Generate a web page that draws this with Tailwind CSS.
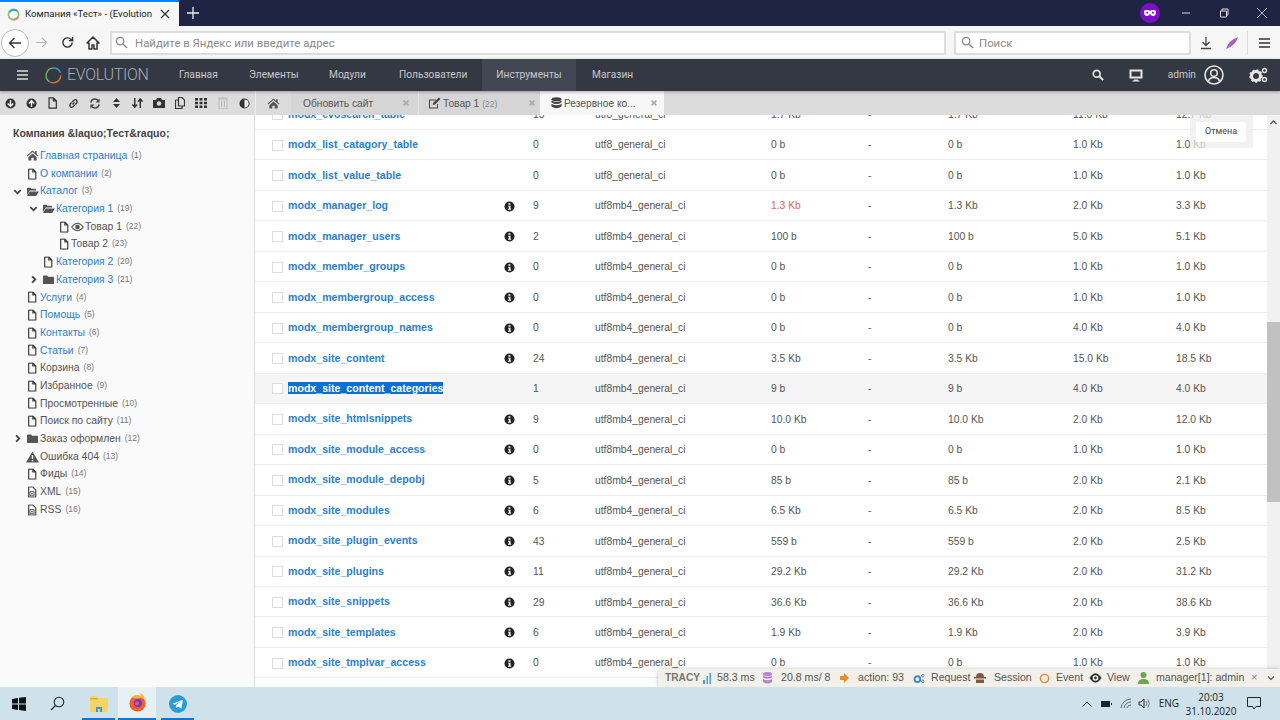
<!DOCTYPE html>
<html lang="ru">
<head>
<meta charset="utf-8">
<title>Evolution</title>
<script src="https://cdn.jsdelivr.net/npm/@tailwindcss/browser@4"></script>
</head>
<body class="w-[1280px] h-[720px] overflow-hidden bg-white font-['Liberation_Sans',sans-serif] relative">
<svg class="hidden"><defs>
<symbol id="f" viewBox="0 0 12 14"><path d="M2 1h5l3.500 3.500V13H2z M7 1v3.500h3.500" fill="none" stroke="#444" stroke-width="1.500" stroke-linejoin="round"/></symbol>
<symbol id="fo" viewBox="0 0 14 12"><path d="M1 3q0-1 1-1h3l1 1h4q1 0 1 1v1H4L1 10zM4 6h10l-3 5H1z" fill="#555"/></symbol>
<symbol id="fc" viewBox="0 0 14 12"><path d="M1 2.500q0-1 1-1h3.500l1 1.500H12q1 0 1 1v6q0 1-1 1H2q-1 0-1-1z" fill="#555"/></symbol>
<symbol id="cd" viewBox="0 0 10 10"><path d="M1.500 3.500L5 7l3.500-3.500" fill="none" stroke="#444" stroke-width="2"/></symbol>
<symbol id="cr" viewBox="0 0 10 10"><path d="M3.500 1.500L7 5l-3.500 3.500" fill="none" stroke="#444" stroke-width="2"/></symbol>
<symbol id="x" viewBox="0 0 10 10"><path d="M2 2l6 6M8 2l-6 6" stroke="#aaa" stroke-width="2"/></symbol>
<symbol id="i" viewBox="0 0 12 12"><circle cx="6" cy="6" r="5.500" fill="#222"/><path d="M4.800 2.400h2.200v1.800H4.800zM4.600 5.100h2.500v3.300h.7v1.100H4.400V8.400h.8V6.200h-.6z" fill="#fff"/></symbol>
<symbol id="h" viewBox="0 0 14 12"><path d="M7 .5L.5 6.300l.8.9L7 2.200l5.700 5 .8-.9-2-1.800V1.200h-1.600v1.800zM2.500 7.800V11.500h3.200V8.500h2.600v3h3.200V7.800L7 3.900z" fill="#555"/></symbol>
<symbol id="xml" viewBox="0 0 12 14"><path d="M2 1h5l3.500 3.500V13H2z" fill="none" stroke="#444" stroke-width="1.400"/><path d="M3.500 6.500h5v5h-5z M5 8l2 2M7 8l-2 2" fill="none" stroke="#444"/></symbol>
</defs></svg>

<div class="flex h-[26px] bg-[#1f2344]">
  <div class="w-[179px] bg-[#f7f7f7] border-t-2 border-[#0a84ff] flex items-center pl-[7px] gap-[5px] text-[9.600px] text-[#222] font-['Roboto',sans-serif] whitespace-nowrap overflow-hidden">
    <svg class="w-[13px] h-[13px] shrink-0" viewBox="0 0 14 14"><circle cx="7" cy="7" r="5.500" fill="#fff" stroke="#7cc576" stroke-width="1.800"/><path d="M3 4.500A5.500 5.500 0 0 1 11 3.200" fill="none" stroke="#3b9dd6" stroke-width="1.800"/><path d="M12 9.500a5.500 5.500 0 0 1-5 3" fill="none" stroke="#e57a5e" stroke-width="1.800"/></svg>
    <span class="w-[127px] shrink-0">Компания «Тест» - (Evolution</span>
    <svg class="w-[10px] h-[10px] ml-[3px] shrink-0" viewBox="0 0 10 10"><path d="M1 1l8 8M9 1l-8 8" stroke="#333" stroke-width="1.200"/></svg>
  </div>
  <svg class="w-[12px] h-[12px] ml-[8px] mt-[7px]" viewBox="0 0 12 12"><path d="M6 0v12M0 6h12" stroke="#eee" stroke-width="1.300"/></svg>
  <div class="ml-auto flex items-center">
    <div class="w-[20px] h-[20px] rounded-full bg-[#7b10c8] flex items-center justify-center mr-[21px]"><svg class="w-[12px] h-[6px]" viewBox="0 0 12 6"><path d="M0 1.500Q0 0 2 0h2.500L6 1l1.500-1H10q2 0 2 1.500Q12 6 9 6 7 6 6 4 5 6 3 6 0 6 0 1.500z" fill="#fff"/><circle cx="3.200" cy="2.800" r="1" fill="#7b10c8"/><circle cx="8.800" cy="2.800" r="1" fill="#7b10c8"/></svg></div>
    <svg class="w-[10px] h-[10px] mr-[28px]" viewBox="0 0 10 10"><path d="M1 5h8" stroke="#ddd"/></svg>
    <svg class="w-[10px] h-[10px] mr-[28px]" viewBox="0 0 10 10"><path d="M1.500 3h6v6h-6zM3 3V1h6v6H7.500" fill="none" stroke="#ddd"/></svg>
    <svg class="w-[10px] h-[10px] mr-[13px]" viewBox="0 0 10 10"><path d="M0 0l10 10M10 0L0 10" stroke="#ddd" stroke-width=".8"/></svg>
  </div>
</div>

<div class="h-[33px] bg-[#f6f6f6] flex items-center relative">
  <div class="w-[28px] h-[28px] ml-[1px] rounded-full border border-[#bbb] bg-white flex items-center justify-center"><svg class="w-[14px] h-[14px]" viewBox="0 0 14 14"><path d="M13 7H1.500M6.500 2L1.500 7l5 5" fill="none" stroke="#333" stroke-width="1.300"/></svg></div>
  <svg class="w-[13px] h-[13px] ml-[6px]" viewBox="0 0 14 14"><path d="M13 7H1.500M6.500 2L1.500 7l5 5" fill="none" stroke="#b5b5b5" stroke-width="1.200" transform="rotate(180 7 7)"/></svg>
  <svg class="w-[13px] h-[13px] ml-[13px]" viewBox="0 0 14 14"><path d="M12 7a5 5 0 1 1-1.500-3.600L12.500 5V1M12.500 5H8.500" fill="none" stroke="#333" stroke-width="1.500"/></svg>
  <svg class="w-[14px] h-[14px] ml-[12px]" viewBox="0 0 14 14"><path d="M7 1L1 7h2v6h3V9h2v4h3V7h2z" fill="none" stroke="#333" stroke-width="1.500" stroke-linejoin="round"/></svg>
  <div class="w-[836px] h-[24px] ml-[10px] bg-white border-2 border-[#ddd] rounded-[2px] flex items-center pl-[3px] gap-[7px] font-['Roboto',sans-serif] text-[11.400px] text-[#8a8a8a]">
    <svg class="w-[13px] h-[13px]" viewBox="0 0 14 14"><circle cx="5.500" cy="5.500" r="4" fill="none" stroke="#888" stroke-width="1.300"/><path d="M8.500 8.500L13 13" stroke="#888" stroke-width="1.500"/></svg>
    <span class="pt-[2px]">Найдите в Яндекс или введите адрес</span>
  </div>
  <div class="w-[237px] h-[24px] ml-[8px] bg-white border-2 border-[#ddd] rounded-[2px] flex items-center pl-[5px] gap-[5px] font-['Roboto',sans-serif] text-[11.400px] text-[#8a8a8a]">
    <svg class="w-[13px] h-[13px]" viewBox="0 0 14 14"><circle cx="5.500" cy="5.500" r="4" fill="none" stroke="#888" stroke-width="1.300"/><path d="M8.500 8.500L13 13" stroke="#888" stroke-width="1.500"/></svg>
    <span class="pt-[2px]">Поиск</span>
  </div>
  <svg class="w-[12px] h-[14px] ml-[9px]" viewBox="0 0 12 14"><path d="M6 1v8M2.500 6L6 9.500 9.500 6M1 12.500h10" fill="none" stroke="#444" stroke-width="1.300"/></svg>
  <svg class="w-[14px] h-[14px] ml-[13px]" viewBox="0 0 14 14"><path d="M1 13Q4 4 13 1 11 9 1 13z" fill="#a35fc9"/></svg>
  <div class="w-px h-[24px] bg-[#ddd] ml-[8px]"></div>
  <svg class="w-[11px] h-[10px] ml-[11px]" viewBox="0 0 11 10"><path d="M0 1h11M0 5h11M0 9h11" stroke="#333" stroke-width="1.300"/></svg>
</div>

<div class="h-[32px] bg-[#343843] flex items-center text-[#c7c9cd] text-[10.200px] font-['Roboto',sans-serif] shadow-[0_1px_3px_rgba(0,0,0,.3)] relative z-10">
  <svg class="w-[11px] h-[10px] ml-[17px]" viewBox="0 0 11 10"><path d="M0 1h11M0 5h11M0 9h11" stroke="#ddd" stroke-width="1.600"/></svg>
  <svg class="w-[17px] h-[17px] ml-[17px]" viewBox="0 0 16 16"><path d="M8 1a7 7 0 0 1 6.500 4.500" fill="none" stroke="#3a9ad9" stroke-width="1.300"/><path d="M14.800 8A7 7 0 0 1 5 14.300" fill="none" stroke="#e2743f" stroke-width="1.300"/><path d="M4.500 14A7 7 0 0 1 8 1" fill="none" stroke="#62b655" stroke-width="1.300"/></svg>
  <span class="ml-[5px] w-[112px] text-[16px] font-light tracking-[-0.3px] text-[#a9acb2]">EVOLUTION</span>
  <span class="w-[70px]">Главная</span>
  <span class="w-[80px]">Элементы</span>
  <span class="w-[70px]">Модули</span>
  <span class="w-[83px]">Пользователи</span>
  <span class="w-[94px] h-full bg-[#424753] flex items-center justify-center">Инструменты</span>
  <span class="ml-[16px]">Магазин</span>
  <div class="ml-auto flex items-center">
    <svg class="w-[12px] h-[12px]" viewBox="0 0 14 14"><circle cx="5.500" cy="5.500" r="4" fill="none" stroke="#e5e5e5" stroke-width="2"/><path d="M8.500 8.500L13 13" stroke="#e5e5e5" stroke-width="2.400"/></svg>
    <svg class="w-[14px] h-[13px] ml-[25px]" viewBox="0 0 14 13"><path d="M1.500 1.500h11v7h-11z" fill="none" stroke="#e5e5e5" stroke-width="2"/><path d="M5 10.500h4v1h1.500v1h-7v-1H5z" fill="#e5e5e5"/></svg>
    <span class="ml-[25px]">admin</span>
    <svg class="w-[20px] h-[20px] ml-[8px]" viewBox="0 0 20 20"><circle cx="10" cy="10" r="9" fill="none" stroke="#e5e5e5" stroke-width="1.600"/><circle cx="10" cy="8" r="3.300" fill="none" stroke="#e5e5e5" stroke-width="1.500"/><path d="M4.500 16q1-3.500 5.500-3.500t5.500 3.500" fill="none" stroke="#e5e5e5" stroke-width="1.500"/></svg>
    <svg class="w-[19px] h-[16px] ml-[25px] mr-[12px]" viewBox="0 0 19 16"><circle cx="7" cy="9" r="4.500" fill="none" stroke="#e5e5e5" stroke-width="3"/><circle cx="7" cy="9" r="6" fill="none" stroke="#e5e5e5" stroke-width="1.600" stroke-dasharray="2 2"/><circle cx="15.500" cy="3.500" r="2" fill="none" stroke="#e5e5e5" stroke-width="1.400"/><circle cx="15.500" cy="12.500" r="2" fill="none" stroke="#e5e5e5" stroke-width="1.400"/></svg>
  </div>
</div>

<div class="h-[24px] flex bg-[#dcdcdc] text-[10.200px] text-[#555]">
  <div class="w-[255px] flex items-center">
    <svg class="w-[11px] h-[11px] ml-[5px]" viewBox="0 0 12 12"><circle cx="6" cy="6" r="5.500" fill="#333"/><path d="M6 2.500v6M3 6l3 3 3-3" fill="none" stroke="#fff" stroke-width="1.500"/></svg>
    <svg class="w-[11px] h-[11px] ml-[10px]" viewBox="0 0 12 12"><circle cx="6" cy="6" r="5.500" fill="#333"/><path d="M6 9.500v-6M3 6l3-3 3 3" fill="none" stroke="#fff" stroke-width="1.500"/></svg>
    <svg class="w-[11px] h-[12px] ml-[10px]" viewBox="0 0 12 14"><path d="M2 1h5l3.500 3.500V13H2z M7 1v3.500h3.500" fill="none" stroke="#333" stroke-width="1.400"/></svg>
    <svg class="w-[11px] h-[11px] ml-[10px]" viewBox="0 0 12 12"><path d="M5 7l2-2M4.500 4.500L6.500 2.500q2-1.500 3 0t0 3L8 7M7.500 7.500L5.500 9.500q-2 1.500-3 0t0-3L4 5" fill="none" stroke="#333" stroke-width="1.500"/></svg>
    <svg class="w-[12px] h-[11px] ml-[10px]" viewBox="0 0 12 12"><path d="M1.500 5A4.500 4.500 0 0 1 10 3.500M10.500 7A4.500 4.500 0 0 1 2 8.500" fill="none" stroke="#444" stroke-width="1.600"/><path d="M11 .5V5H6.500zM1 11.500V7h4.500z" fill="#444"/></svg>
    <svg class="w-[7px] h-[10px] ml-[12px]" viewBox="0 0 7 10"><path d="M3.500 0L7 4H0zM3.500 10L0 6h7z" fill="#333"/></svg>
    <svg class="w-[11px] h-[11px] ml-[12px]" viewBox="0 0 12 12"><path d="M3 0v9M.5 7L3 10l2.500-3M9 11V2M6.500 4L9 1l2.500 3" fill="none" stroke="#333" stroke-width="1.600"/></svg>
    <svg class="w-[12px] h-[10px] ml-[10px]" viewBox="0 0 12 10"><path d="M0 2h3l1-2h4l1 2h3v8H0z" fill="#333"/><circle cx="6" cy="5.500" r="2.200" fill="#ddd"/></svg>
    <svg class="w-[10px] h-[12px] ml-[10px]" viewBox="0 0 10 12"><path d="M3.500 .5H7L9.500 3v6h-6zM.5 3h3v6.500h0V3zM.5 3v8.500h6.500V9" fill="none" stroke="#333" stroke-width="1.200"/></svg>
    <svg class="w-[12px] h-[10px] ml-[10px]" viewBox="0 0 12 10"><path d="M0 0h3v2.500H0zM4.500 0h3v2.500h-3zM9 0h3v2.500H9zM0 3.700h3v2.600H0zM4.500 3.700h3v2.600h-3zM9 3.700h3v2.600H9zM0 7.500h3V10H0zM4.500 7.500h3V10h-3zM9 7.500h3V10H9z" fill="#333"/></svg>
    <svg class="w-[10px] h-[12px] ml-[11px]" viewBox="0 0 10 12"><path d="M1 2h8v10H1zM0 1h10M3.500 0h3" fill="none" stroke="#bbb"/><path d="M3.500 4v6M6.500 4v6" stroke="#bbb"/></svg>
    <svg class="w-[11px] h-[11px] ml-[11px]" viewBox="0 0 12 12"><circle cx="6" cy="6" r="5.500" fill="#333"/><path d="M6 1.500a4.500 4.500 0 0 1 0 9z" fill="#eee"/></svg>
  </div>
  <div class="w-px bg-[#eee]"></div>
  <div class="w-[35px] flex items-center justify-center"><svg class="w-[13px] h-[11px]" viewBox="0 0 14 12"><use href="#h"/></svg></div>
  <div class="w-[127px] flex items-center pl-[12px] bg-[#d6d6d6] whitespace-nowrap"><span class="pt-[2px]">Обновить сайт</span><svg class="w-[8px] h-[8px] ml-[29px]" viewBox="0 0 10 10"><use href="#x"/></svg></div>
  <div class="w-[122px] flex items-center pl-[9px] bg-[#d6d6d6] border-l border-[#e6e6e6] whitespace-nowrap"><svg class="w-[13px] h-[12px] mr-[2px]" viewBox="0 0 13 12"><path d="M1 2.500h7v1H2v7h7V7h1v4.500H1z" fill="#444"/><path d="M11 .5l1.500 1.500L7 7.500 4.800 8 5.300 5.800z" fill="#444"/></svg><span class="pt-[2px]">Товар 1</span><span class="text-[8.500px] text-[#888] ml-[3px] pt-[2px]">(22)</span><svg class="w-[8px] h-[8px] ml-[31px]" viewBox="0 0 10 10"><use href="#x"/></svg></div>
  <div class="w-[124px] flex items-center pl-[11px] bg-[#f7f7f7] whitespace-nowrap"><svg class="w-[11px] h-[12px] mr-[2px]" viewBox="0 0 11 12"><ellipse cx="5.500" cy="2.200" rx="5" ry="2" fill="#444"/><path d="M.5 3.500q5 3 10 0v2q-5 3-10 0zM.5 6.800q5 3 10 0v2.800q-5 3.500-10 0z" fill="#444"/></svg><span class="pt-[2px]">Резервное ко...</span><svg class="w-[8px] h-[8px] ml-[14px]" viewBox="0 0 10 10"><use href="#x"/></svg></div>
</div>

<div class="h-[572px] flex relative overflow-hidden">
  <aside class="w-[255px] shrink-0 border-r border-[#ddd] bg-[#fafafa]">
    <div class="h-[40px] pl-[13px] pt-[12px] text-[10.500px] font-bold text-[#444] leading-[13px]">Компания &amp;laquo;Тест&amp;raquo;</div>
    <div class="text-[10.400px] leading-[17.700px] text-[#555] mt-[-8px]">
      <div class="h-[17.700px] flex items-center pl-[26px]"><svg class="w-[13px] h-[11px] mr-px" viewBox="0 0 14 12"><use href="#h"/></svg><a class="text-[#2a7fd0]">Главная страница</a><span class="text-[8.500px] text-[#777] ml-[4px]">(1)</span></div>
      <div class="h-[17.700px] flex items-center pl-[27px]"><svg class="w-[10px] h-[12px] mr-[3px]" viewBox="0 0 12 14"><use href="#f"/></svg><a class="text-[#2a7fd0]">О компании</a><span class="text-[8.500px] text-[#777] ml-[4px]">(2)</span></div>
      <div class="h-[17.700px] flex items-center pl-[13px]"><svg class="w-[9px] h-[9px] mr-[4px]" viewBox="0 0 10 10"><use href="#cd"/></svg><svg class="w-[13px] h-[11px] mr-px" viewBox="0 0 14 12"><use href="#fo"/></svg><a class="text-[#2a7fd0]">Каталог</a><span class="text-[8.500px] text-[#777] ml-[4px]">(3)</span></div>
      <div class="h-[17.700px] flex items-center pl-[29px]"><svg class="w-[9px] h-[9px] mr-[4px]" viewBox="0 0 10 10"><use href="#cd"/></svg><svg class="w-[13px] h-[11px] mr-px" viewBox="0 0 14 12"><use href="#fo"/></svg><a class="text-[#2a7fd0]">Категория 1</a><span class="text-[8.500px] text-[#777] ml-[4px]">(19)</span></div>
      <div class="h-[17.700px] flex items-center pl-[59px]"><svg class="w-[10px] h-[12px] mr-[2px]" viewBox="0 0 12 14"><use href="#f"/></svg><svg class="w-[13px] h-[10px] mr-px" viewBox="0 0 14 10"><path d="M.7 5Q4 1 7 1t6.300 4Q10 9 7 9T.7 5z" fill="none" stroke="#555" stroke-width="1.200"/><circle cx="7" cy="5" r="2.500" fill="#555"/></svg><span>Товар 1</span><span class="text-[8.500px] text-[#777] ml-[4px]">(22)</span></div>
      <div class="h-[17.700px] flex items-center pl-[59px]"><svg class="w-[10px] h-[12px] mr-[2px]" viewBox="0 0 12 14"><use href="#f"/></svg><span>Товар 2</span><span class="text-[8.500px] text-[#777] ml-[4px]">(23)</span></div>
      <div class="h-[17.700px] flex items-center pl-[43px]"><svg class="w-[10px] h-[12px] mr-[3px]" viewBox="0 0 12 14"><use href="#f"/></svg><a class="text-[#2a7fd0]">Категория 2</a><span class="text-[8.500px] text-[#777] ml-[4px]">(20)</span></div>
      <div class="h-[17.700px] flex items-center pl-[29px]"><svg class="w-[9px] h-[9px] mr-[4px]" viewBox="0 0 10 10"><use href="#cr"/></svg><svg class="w-[13px] h-[11px] mr-px" viewBox="0 0 14 12"><use href="#fc"/></svg><a class="text-[#2a7fd0]">Категория 3</a><span class="text-[8.500px] text-[#777] ml-[4px]">(21)</span></div>
      <div class="h-[17.700px] flex items-center pl-[27px]"><svg class="w-[10px] h-[12px] mr-[3px]" viewBox="0 0 12 14"><use href="#f"/></svg><a class="text-[#2a7fd0]">Услуги</a><span class="text-[8.500px] text-[#777] ml-[4px]">(4)</span></div>
      <div class="h-[17.700px] flex items-center pl-[27px]"><svg class="w-[10px] h-[12px] mr-[3px]" viewBox="0 0 12 14"><use href="#f"/></svg><a class="text-[#2a7fd0]">Помощь</a><span class="text-[8.500px] text-[#777] ml-[4px]">(5)</span></div>
      <div class="h-[17.700px] flex items-center pl-[27px]"><svg class="w-[10px] h-[12px] mr-[3px]" viewBox="0 0 12 14"><use href="#f"/></svg><a class="text-[#2a7fd0]">Контакты</a><span class="text-[8.500px] text-[#777] ml-[4px]">(6)</span></div>
      <div class="h-[17.700px] flex items-center pl-[27px]"><svg class="w-[10px] h-[12px] mr-[3px]" viewBox="0 0 12 14"><use href="#f"/></svg><a class="text-[#2a7fd0]">Статьи</a><span class="text-[8.500px] text-[#777] ml-[4px]">(7)</span></div>
      <div class="h-[17.700px] flex items-center pl-[27px]"><svg class="w-[10px] h-[12px] mr-[3px]" viewBox="0 0 12 14"><use href="#f"/></svg><span>Корзина</span><span class="text-[8.500px] text-[#777] ml-[4px]">(8)</span></div>
      <div class="h-[17.700px] flex items-center pl-[27px]"><svg class="w-[10px] h-[12px] mr-[3px]" viewBox="0 0 12 14"><use href="#f"/></svg><span>Избранное</span><span class="text-[8.500px] text-[#777] ml-[4px]">(9)</span></div>
      <div class="h-[17.700px] flex items-center pl-[27px]"><svg class="w-[10px] h-[12px] mr-[3px]" viewBox="0 0 12 14"><use href="#f"/></svg><span>Просмотренные</span><span class="text-[8.500px] text-[#777] ml-[4px]">(10)</span></div>
      <div class="h-[17.700px] flex items-center pl-[27px]"><svg class="w-[10px] h-[12px] mr-[3px]" viewBox="0 0 12 14"><use href="#f"/></svg><span>Поиск по сайту</span><span class="text-[8.500px] text-[#777] ml-[4px]">(11)</span></div>
      <div class="h-[17.700px] flex items-center pl-[13px]"><svg class="w-[9px] h-[9px] mr-[4px]" viewBox="0 0 10 10"><use href="#cr"/></svg><svg class="w-[13px] h-[11px] mr-px" viewBox="0 0 14 12"><use href="#fc"/></svg><span>Заказ оформлен</span><span class="text-[8.500px] text-[#777] ml-[4px]">(12)</span></div>
      <div class="h-[17.700px] flex items-center pl-[26px]"><svg class="w-[13px] h-[12px] mr-px" viewBox="0 0 13 12"><path d="M6.500.5L13 11.500H0z" fill="#555"/><path d="M5.800 4h1.400v4H5.800zM5.800 9h1.400v1.300H5.800z" fill="#fff"/></svg><span>Ошибка 404</span><span class="text-[8.500px] text-[#777] ml-[4px]">(13)</span></div>
      <div class="h-[17.700px] flex items-center pl-[27px]"><svg class="w-[10px] h-[12px] mr-[3px]" viewBox="0 0 12 14"><use href="#f"/></svg><span>Фиды</span><span class="text-[8.500px] text-[#777] ml-[4px]">(14)</span></div>
      <div class="h-[17.700px] flex items-center pl-[27px]"><svg class="w-[10px] h-[12px] mr-[3px]" viewBox="0 0 12 14"><use href="#xml"/></svg><span>XML</span><span class="text-[8.500px] text-[#777] ml-[4px]">(15)</span></div>
      <div class="h-[17.700px] flex items-center pl-[27px]"><svg class="w-[10px] h-[12px] mr-[3px]" viewBox="0 0 12 14"><use href="#xml"/></svg><span>RSS</span><span class="text-[8.500px] text-[#777] ml-[4px]">(16)</span></div>
    </div>
  </aside>

  <main class="flex-1 overflow-hidden text-[10.300px] text-[#555]">
    <div class="mt-[-15.500px] [&>div]:grid [&>div]:grid-cols-[16px_245px_62px_176px_97px_80px_125px_103px_1fr] [&>div]:items-center [&>div]:h-[30.470px] [&>div]:pl-[17px] [&>div]:pt-px [&>div]:border-b [&>div]:border-[#eee] [&>div>b]:text-[#2a7fd0] [&>div>b]:text-[10.600px]">
      <div><i class="w-[11px] h-[11px] border border-[#ddd] bg-white"></i><b>modx_evosearch_table</b><span>13</span><span>utf8_general_ci</span><span>1.7 Kb</span><span>-</span><span>1.7 Kb</span><span>11.0 Kb</span><span>12.7 Kb</span></div>
      <div><i class="w-[11px] h-[11px] border border-[#ddd] bg-white"></i><b>modx_list_catagory_table</b><span>0</span><span>utf8_general_ci</span><span>0 b</span><span>-</span><span>0 b</span><span>1.0 Kb</span><span>1.0 Kb</span></div>
      <div><i class="w-[11px] h-[11px] border border-[#ddd] bg-white"></i><b>modx_list_value_table</b><span>0</span><span>utf8_general_ci</span><span>0 b</span><span>-</span><span>0 b</span><span>1.0 Kb</span><span>1.0 Kb</span></div>
      <div><i class="w-[11px] h-[11px] border border-[#ddd] bg-white"></i><b class="flex justify-between pr-[18px] items-center">modx_manager_log<svg class="w-[11px] h-[11px]" viewBox="0 0 12 12"><use href="#i"/></svg></b><span>9</span><span>utf8mb4_general_ci</span><span class="text-[#e2635a]">1.3 Kb</span><span>-</span><span>1.3 Kb</span><span>2.0 Kb</span><span>3.3 Kb</span></div>
      <div><i class="w-[11px] h-[11px] border border-[#ddd] bg-white"></i><b class="flex justify-between pr-[18px] items-center">modx_manager_users<svg class="w-[11px] h-[11px]" viewBox="0 0 12 12"><use href="#i"/></svg></b><span>2</span><span>utf8mb4_general_ci</span><span>100 b</span><span>-</span><span>100 b</span><span>5.0 Kb</span><span>5.1 Kb</span></div>
      <div><i class="w-[11px] h-[11px] border border-[#ddd] bg-white"></i><b class="flex justify-between pr-[18px] items-center">modx_member_groups<svg class="w-[11px] h-[11px]" viewBox="0 0 12 12"><use href="#i"/></svg></b><span>0</span><span>utf8mb4_general_ci</span><span>0 b</span><span>-</span><span>0 b</span><span>1.0 Kb</span><span>1.0 Kb</span></div>
      <div><i class="w-[11px] h-[11px] border border-[#ddd] bg-white"></i><b class="flex justify-between pr-[18px] items-center">modx_membergroup_access<svg class="w-[11px] h-[11px]" viewBox="0 0 12 12"><use href="#i"/></svg></b><span>0</span><span>utf8mb4_general_ci</span><span>0 b</span><span>-</span><span>0 b</span><span>1.0 Kb</span><span>1.0 Kb</span></div>
      <div><i class="w-[11px] h-[11px] border border-[#ddd] bg-white"></i><b class="flex justify-between pr-[18px] items-center">modx_membergroup_names<svg class="w-[11px] h-[11px]" viewBox="0 0 12 12"><use href="#i"/></svg></b><span>0</span><span>utf8mb4_general_ci</span><span>0 b</span><span>-</span><span>0 b</span><span>4.0 Kb</span><span>4.0 Kb</span></div>
      <div><i class="w-[11px] h-[11px] border border-[#ddd] bg-white"></i><b class="flex justify-between pr-[18px] items-center">modx_site_content<svg class="w-[11px] h-[11px]" viewBox="0 0 12 12"><use href="#i"/></svg></b><span>24</span><span>utf8mb4_general_ci</span><span>3.5 Kb</span><span>-</span><span>3.5 Kb</span><span>15.0 Kb</span><span>18.5 Kb</span></div>
      <div class="bg-[#f5f5f5]"><i class="w-[11px] h-[11px] border border-[#ddd] bg-white"></i><b class="!text-white"><span class="bg-[#0a6fd0] text-white">modx_site_content_categories</span></b><span>1</span><span>utf8mb4_general_ci</span><span>9 b</span><span>-</span><span>9 b</span><span>4.0 Kb</span><span>4.0 Kb</span></div>
      <div><i class="w-[11px] h-[11px] border border-[#ddd] bg-white"></i><b class="flex justify-between pr-[18px] items-center">modx_site_htmlsnippets<svg class="w-[11px] h-[11px]" viewBox="0 0 12 12"><use href="#i"/></svg></b><span>9</span><span>utf8mb4_general_ci</span><span>10.0 Kb</span><span>-</span><span>10.0 Kb</span><span>2.0 Kb</span><span>12.0 Kb</span></div>
      <div><i class="w-[11px] h-[11px] border border-[#ddd] bg-white"></i><b class="flex justify-between pr-[18px] items-center">modx_site_module_access<svg class="w-[11px] h-[11px]" viewBox="0 0 12 12"><use href="#i"/></svg></b><span>0</span><span>utf8mb4_general_ci</span><span>0 b</span><span>-</span><span>0 b</span><span>1.0 Kb</span><span>1.0 Kb</span></div>
      <div><i class="w-[11px] h-[11px] border border-[#ddd] bg-white"></i><b class="flex justify-between pr-[18px] items-center">modx_site_module_depobj<svg class="w-[11px] h-[11px]" viewBox="0 0 12 12"><use href="#i"/></svg></b><span>5</span><span>utf8mb4_general_ci</span><span>85 b</span><span>-</span><span>85 b</span><span>2.0 Kb</span><span>2.1 Kb</span></div>
      <div><i class="w-[11px] h-[11px] border border-[#ddd] bg-white"></i><b class="flex justify-between pr-[18px] items-center">modx_site_modules<svg class="w-[11px] h-[11px]" viewBox="0 0 12 12"><use href="#i"/></svg></b><span>6</span><span>utf8mb4_general_ci</span><span>6.5 Kb</span><span>-</span><span>6.5 Kb</span><span>2.0 Kb</span><span>8.5 Kb</span></div>
      <div><i class="w-[11px] h-[11px] border border-[#ddd] bg-white"></i><b class="flex justify-between pr-[18px] items-center">modx_site_plugin_events<svg class="w-[11px] h-[11px]" viewBox="0 0 12 12"><use href="#i"/></svg></b><span>43</span><span>utf8mb4_general_ci</span><span>559 b</span><span>-</span><span>559 b</span><span>2.0 Kb</span><span>2.5 Kb</span></div>
      <div><i class="w-[11px] h-[11px] border border-[#ddd] bg-white"></i><b class="flex justify-between pr-[18px] items-center">modx_site_plugins<svg class="w-[11px] h-[11px]" viewBox="0 0 12 12"><use href="#i"/></svg></b><span>11</span><span>utf8mb4_general_ci</span><span>29.2 Kb</span><span>-</span><span>29.2 Kb</span><span>2.0 Kb</span><span>31.2 Kb</span></div>
      <div><i class="w-[11px] h-[11px] border border-[#ddd] bg-white"></i><b class="flex justify-between pr-[18px] items-center">modx_site_snippets<svg class="w-[11px] h-[11px]" viewBox="0 0 12 12"><use href="#i"/></svg></b><span>29</span><span>utf8mb4_general_ci</span><span>36.6 Kb</span><span>-</span><span>36.6 Kb</span><span>2.0 Kb</span><span>38.6 Kb</span></div>
      <div><i class="w-[11px] h-[11px] border border-[#ddd] bg-white"></i><b class="flex justify-between pr-[18px] items-center">modx_site_templates<svg class="w-[11px] h-[11px]" viewBox="0 0 12 12"><use href="#i"/></svg></b><span>6</span><span>utf8mb4_general_ci</span><span>1.9 Kb</span><span>-</span><span>1.9 Kb</span><span>2.0 Kb</span><span>3.9 Kb</span></div>
      <div><i class="w-[11px] h-[11px] border border-[#ddd] bg-white"></i><b class="flex justify-between pr-[18px] items-center">modx_site_tmplvar_access<svg class="w-[11px] h-[11px]" viewBox="0 0 12 12"><use href="#i"/></svg></b><span>0</span><span>utf8mb4_general_ci</span><span>0 b</span><span>-</span><span>0 b</span><span>1.0 Kb</span><span>1.0 Kb</span></div>
    </div>
  </main>

  <div class="w-[13px] shrink-0 bg-[#f1f1f1] flex flex-col items-center relative">
    <svg class="w-[7px] h-[5px] mt-[5px]" viewBox="0 0 7 5"><path d="M.5 4L3.500 1l3 3" fill="none" stroke="#555" stroke-width="1.300"/></svg>
    <div class="w-full h-[180px] bg-[#c1c1c1] mt-[197px]"></div>
  </div>

  <div class="absolute left-[1190px] top-0 w-[63px] h-[33px] bg-[#eeeeee]/75 pl-[6px] pt-[7px]"><div class="w-[50px] h-[20px] bg-white text-[#444] text-[9px] flex items-center justify-center font-['Roboto',sans-serif]">Отмена</div></div>

  <div class="absolute left-[658px] right-0 bottom-0 h-[18px] bg-[#f2f0e8] shadow-[0_0_4px_rgba(0,0,0,.25)] flex items-center pl-[7px] text-[10.600px] text-[#555] whitespace-nowrap">
    <span class="text-[#777] font-bold text-[10.200px] w-[38px]">TRACY</span>
    <svg class="w-[10px] h-[11px] mr-[4px]" viewBox="0 0 10 11"><path d="M0 7h2v4H0zM3.500 3h1.500v8H3.500zM6.500 0h1.500v11H6.500z" fill="#4a9ad9"/></svg>
    <span class="w-[46px]">58.3 ms</span>
    <svg class="w-[9px] h-[12px] mr-[9px]" viewBox="0 0 9 12"><ellipse cx="4.500" cy="2" rx="4.500" ry="2" fill="#b583d4"/><path d="M0 3.500q4.500 2.500 9 0v2q-4.500 2.500-9 0zM0 7q4.500 2.500 9 0v3q-4.500 3-9 0z" fill="#b583d4"/></svg>
    <span class="w-[59px]">20.8 ms/ 8</span>
    <svg class="w-[10px] h-[10px] mr-[8px]" viewBox="0 0 10 10"><path d="M0 3h4V0l5 5-5 5V7H0z" fill="#e98b2a"/></svg>
    <span class="w-[55px]">action: 93</span>
    <svg class="w-[12px] h-[11px] mr-[6px]" viewBox="0 0 19 16"><circle cx="7" cy="9" r="4.500" fill="none" stroke="#3f85c5" stroke-width="3"/><circle cx="15.500" cy="3.500" r="2" fill="none" stroke="#3f85c5" stroke-width="1.500"/><circle cx="15.500" cy="12.500" r="2" fill="none" stroke="#3f85c5" stroke-width="1.500"/></svg>
    <span class="w-[43px]">Request</span>
    <svg class="w-[12px] h-[10px] mr-[8px]" viewBox="0 0 12 10"><path d="M2 4q0-4 4-4t4 4h2v1.500H0V4zM2 6.500h8V10H2z" fill="#7a5a44"/></svg>
    <span class="w-[45px]">Session</span>
    <svg class="w-[11px] h-[11px] mr-[6px]" viewBox="0 0 12 12"><circle cx="6" cy="6" r="4.500" fill="none" stroke="#e7873a" stroke-width="1.600"/></svg>
    <span class="w-[33px]">Event</span>
    <svg class="w-[13px] h-[10px] mr-[5px]" viewBox="0 0 14 10"><path d="M.5 5Q4 0 7 0t6.500 5Q10 10 7 10T.5 5z" fill="#333"/><circle cx="7" cy="5" r="3" fill="#fff"/><circle cx="7" cy="5" r="1.500" fill="#333"/></svg>
    <span class="w-[31px]">View</span>
    <svg class="w-[11px] h-[12px] mr-[7px]" viewBox="0 0 11 12"><circle cx="5.500" cy="3" r="3" fill="#6aa84f"/><path d="M0 12q0-5 5.500-5t5.500 5z" fill="#6aa84f"/></svg>
    <span>manager[1]: admin</span>
    <span class="ml-[7px] text-[#888]">×</span>
    <svg class="w-[8px] h-[6px] ml-[9px]" viewBox="0 0 8 6"><path d="M1 1.500l3 3 3-3" fill="none" stroke="#555" stroke-width="1.200"/></svg>
  </div>
</div>

<div class="h-[33px] bg-[#cfe2ec] flex items-center relative">
  <svg class="w-[14px] h-[14px] ml-[12px]" viewBox="0 0 14 14"><path d="M0 2l6-1v5.500H0zM7 .8L14 0v6.500H7zM0 7.500h6V13l-6-1zM7 7.500h7V14l-7-1z" fill="#111"/></svg>
  <svg class="w-[15px] h-[15px] ml-[24px]" viewBox="0 0 15 15"><circle cx="9" cy="6" r="4.800" fill="none" stroke="#222" stroke-width="1.100"/><path d="M5.500 9.500L1 14" stroke="#222" stroke-width="1.300"/></svg>
  <div class="w-[33px] h-[31px] ml-[17px] border-b-2 border-[#0a78d4] flex items-center justify-center self-end"><svg class="w-[18px] h-[16px]" viewBox="0 0 18 16"><path d="M0 2q0-2 2-2h5l2 2h8q1 0 1 1v11q0 2-2 2H2q-2 0-2-2z" fill="#f6d365"/><path d="M0 2h7L8.500 3.500H0z" fill="#d9a93a"/><path d="M6 11h6v5h-2v-3H8v3H6z" fill="#3a9ad9"/></svg></div>
  <div class="w-[38px] h-[33px] ml-[3px] bg-[#e6f0f5] border-b-2 border-[#0a78d4] flex items-center justify-center"><svg class="w-[19px] h-[19px]" viewBox="0 0 20 20"><circle cx="10" cy="11" r="8.500" fill="#f0612a"/><path d="M4 4q3 2 6 2 5-2 8 1-1-5-5-7 1 2 0 3-4-2-9 1z" fill="#fbb53d"/><circle cx="10.500" cy="10.500" r="4.500" fill="#6a3cc4"/><circle cx="9.500" cy="11" r="2.200" fill="#ec4f72"/></svg></div>
  <div class="w-[33px] h-[31px] ml-[5px] border-b-2 border-[#0a78d4] flex items-center justify-center self-end"><svg class="w-[18px] h-[18px]" viewBox="0 0 18 18"><circle cx="9" cy="9" r="9" fill="#2a9dd9"/><path d="M3.500 8.800l10.500-4-1.700 9-3.200-2.300-1.600 1.600-.4-2.800 5-4.300-6.300 3.700z" fill="#fff"/></svg></div>
  <div class="ml-auto flex items-center text-[#222] font-['Open_Sans',sans-serif]">
    <svg class="w-[10px] h-[6px]" viewBox="0 0 10 6"><path d="M.5 5.500L5 1l4.500 4.500" fill="none" stroke="#222"/></svg>
    <svg class="w-[12px] h-[8px] ml-[8px]" viewBox="0 0 12 8"><path d="M1 1h9v6H1zM11 3h1v2h-1z" fill="#222"/></svg>
    <svg class="w-[13px] h-[11px] ml-[8px]" viewBox="0 0 13 11"><path d="M1 10A10 10 0 0 1 11 1M4 10A7 7 0 0 1 11 4M7 10A4 4 0 0 1 11 7" fill="none" stroke="#666"/></svg>
    <svg class="w-[13px] h-[11px] ml-[5px]" viewBox="0 0 13 11"><path d="M1 4h2l3-3v9L3 7H1z" fill="none" stroke="#222"/><path d="M8 3q1.500 2.500 0 5M10 1.500q2.500 4 0 8" fill="none" stroke="#777"/></svg>
    <span class="text-[10px] ml-[8px]">ENG</span>
    <div class="w-[60px] ml-[2px] text-[10px] leading-[14px] text-center">20:03<br>31.10.2020</div>
    <svg class="w-[14px] h-[13px] ml-[6px] mr-[19px]" viewBox="0 0 14 13"><path d="M.5.500h13v9H9L7 12 5.500 9.500h-5z" fill="none" stroke="#222"/></svg>
  </div>
</div>
</body>
</html>
